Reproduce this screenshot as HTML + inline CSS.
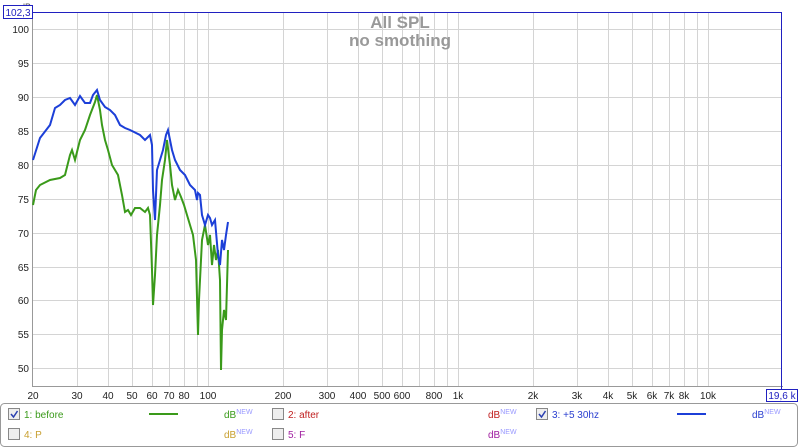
<!DOCTYPE html>
<html><head><style>
body{margin:0;width:800px;height:448px;background:#fff;overflow:hidden;font-family:"Liberation Sans",sans-serif}
svg{position:absolute;left:0;top:0}
</style></head><body>
<svg width="800" height="448" font-family="Liberation Sans, sans-serif">
<g stroke="#d4d4d4" stroke-width="1">
<line x1="33" y1="29.5" x2="782" y2="29.5"/><line x1="33" y1="63.5" x2="782" y2="63.5"/><line x1="33" y1="97.5" x2="782" y2="97.5"/><line x1="33" y1="131.5" x2="782" y2="131.5"/><line x1="33" y1="165.5" x2="782" y2="165.5"/><line x1="33" y1="199.5" x2="782" y2="199.5"/><line x1="33" y1="233.5" x2="782" y2="233.5"/><line x1="33" y1="267.5" x2="782" y2="267.5"/><line x1="33" y1="300.5" x2="782" y2="300.5"/><line x1="33" y1="334.5" x2="782" y2="334.5"/><line x1="33" y1="368.5" x2="782" y2="368.5"/>
<line x1="77.5" y1="12" x2="77.5" y2="386"/><line x1="108.5" y1="12" x2="108.5" y2="386"/><line x1="132.5" y1="12" x2="132.5" y2="386"/><line x1="152.5" y1="12" x2="152.5" y2="386"/><line x1="169.5" y1="12" x2="169.5" y2="386"/><line x1="184.5" y1="12" x2="184.5" y2="386"/><line x1="197.5" y1="12" x2="197.5" y2="386"/><line x1="208.5" y1="12" x2="208.5" y2="386"/>
<line x1="283.5" y1="12" x2="283.5" y2="386"/><line x1="327.5" y1="12" x2="327.5" y2="386"/><line x1="358.5" y1="12" x2="358.5" y2="386"/><line x1="382.5" y1="12" x2="382.5" y2="386"/><line x1="402.5" y1="12" x2="402.5" y2="386"/><line x1="419.5" y1="12" x2="419.5" y2="386"/><line x1="434.5" y1="12" x2="434.5" y2="386"/><line x1="447.5" y1="12" x2="447.5" y2="386"/><line x1="458.5" y1="12" x2="458.5" y2="386"/>
<line x1="533.5" y1="12" x2="533.5" y2="386"/><line x1="577.5" y1="12" x2="577.5" y2="386"/><line x1="608.5" y1="12" x2="608.5" y2="386"/><line x1="632.5" y1="12" x2="632.5" y2="386"/><line x1="652.5" y1="12" x2="652.5" y2="386"/><line x1="669.5" y1="12" x2="669.5" y2="386"/><line x1="684.5" y1="12" x2="684.5" y2="386"/><line x1="697.5" y1="12" x2="697.5" y2="386"/><line x1="708.5" y1="12" x2="708.5" y2="386"/>
</g>
<line x1="32.5" y1="12" x2="32.5" y2="387" stroke="#999"/>
<line x1="33" y1="386.5" x2="783" y2="386.5" stroke="#999"/>
<line x1="33" y1="12.5" x2="782" y2="12.5" stroke="#2020c0"/>
<line x1="781.5" y1="12" x2="781.5" y2="390" stroke="#2020c0"/>
<text x="400" y="28" text-anchor="middle" font-size="17" fill="#999" font-weight="bold">All SPL</text>
<text x="400" y="46" text-anchor="middle" font-size="17" fill="#999" font-weight="bold">no smothing</text>
<g font-size="10" fill="#222" text-anchor="end">
<text x="29" y="33">100</text><text x="29" y="67">95</text><text x="29" y="101">90</text><text x="29" y="135">85</text><text x="29" y="169">80</text><text x="29" y="203">75</text><text x="29" y="237">70</text><text x="29" y="271">65</text><text x="29" y="304">60</text><text x="29" y="338">55</text><text x="29" y="372">50</text>
</g>
<text x="20" y="10" font-size="9" fill="#555">dB</text>
<rect x="3.5" y="5.5" width="29" height="13" fill="#fff" stroke="#2020c0"/>
<text x="18" y="16" text-anchor="middle" font-size="10" fill="#2020c0">102,3</text>
<g font-size="10" fill="#222" text-anchor="middle">
<text x="33" y="399">20</text><text x="77" y="399">30</text><text x="108" y="399">40</text><text x="132" y="399">50</text><text x="152" y="399">60</text><text x="169" y="399">70</text><text x="184" y="399">80</text><text x="208" y="399">100</text><text x="283" y="399">200</text><text x="327" y="399">300</text><text x="358" y="399">400</text><text x="382" y="399">500</text><text x="402" y="399">600</text><text x="434" y="399">800</text><text x="458" y="399">1k</text><text x="533" y="399">2k</text><text x="577" y="399">3k</text><text x="608" y="399">4k</text><text x="632" y="399">5k</text><text x="652" y="399">6k</text><text x="669" y="399">7k</text><text x="684" y="399">8k</text><text x="708" y="399">10k</text>
</g>
<rect x="766.5" y="389.5" width="31" height="12" fill="#fff" stroke="#2020c0"/>
<text x="782" y="399" text-anchor="middle" font-size="10" fill="#2020c0">19,6 k</text>
<polyline fill="none" stroke="#3a9a1a" stroke-width="2" points="33,205 36,190 40,185 50,180 60,178 65,175 70,155 72,150 75,160 80,140 85,130 90,115 95,102 97,95 100,110 102,125 105,140 108,150 112,165 118,175 122,195 125,212 128,210 131,215 135,208 140,208 145,212 148,208 150,215 152,270 153,305 155,275 157,235 160,205 162,180 165,160 167,140 170,165 172,185 175,200 178,190 181,197 184,205 187,215 190,225 193,235 196,260 198,335 199,300 202,240 205,225 208,245 210,235 212,265 214,245 216,260 218,250 220,280 221,370 222,330 224,310 226,320 228,250"/>
<polyline fill="none" stroke="#1c3fd8" stroke-width="2" points="33,160 40,138 50,125 55,108 60,105 65,100 70,98 75,105 80,96 85,103 90,103 93,95 97,90 100,100 105,107 110,110 115,115 120,125 125,128 130,130 140,135 145,140 150,135 152,145 153,190 155,220 157,170 160,160 163,150 166,135 168,130 170,140 172,150 175,160 180,170 185,175 190,185 195,190 197,200 198,193 200,195 202,215 205,225 208,215 210,218 212,225 215,220 218,255 220,265 222,240 224,250 226,235 228,222"/>
<rect x="0.5" y="403.5" width="797" height="43" rx="4" fill="#fff" stroke="#999"/>
<g stroke="#888" fill="#eee">
<rect x="8.5" y="408.5" width="11" height="11"/><rect x="8.5" y="428.5" width="11" height="11"/><rect x="272.5" y="408.5" width="11" height="11"/><rect x="272.5" y="428.5" width="11" height="11"/><rect x="536.5" y="408.5" width="11" height="11"/>
</g>
<g stroke="#2a3fb0" stroke-width="1.5" fill="none"><path d="M11 414l2.5 3 4-6"/><path d="M539 414l2.5 3 4-6"/></g>
<g font-size="10">
<text x="24" y="418" fill="#3a9a1a">1: before</text>
<line x1="149" y1="414" x2="178" y2="414" stroke="#3a9a1a" stroke-width="2"/>
<text x="224" y="418" fill="#3a9a1a">dB<tspan font-size="7" dy="-4" fill="#99f">NEW</tspan></text>
<text x="288" y="418" fill="#c02020">2: after</text>
<text x="488" y="418" fill="#c02020">dB<tspan font-size="7" dy="-4" fill="#99f">NEW</tspan></text>
<text x="552" y="418" fill="#2a3fd0">3: +5 30hz</text>
<line x1="677" y1="414" x2="706" y2="414" stroke="#1c3fd8" stroke-width="2"/>
<text x="752" y="418" fill="#2a3fd0">dB<tspan font-size="7" dy="-4" fill="#99f">NEW</tspan></text>
<text x="24" y="438" fill="#c8a030">4: P</text>
<text x="224" y="438" fill="#c8a030">dB<tspan font-size="7" dy="-4" fill="#99f">NEW</tspan></text>
<text x="288" y="438" fill="#a020a0">5: F</text>
<text x="488" y="438" fill="#a020a0">dB<tspan font-size="7" dy="-4" fill="#99f">NEW</tspan></text>
</g>
</svg>
</body></html>
